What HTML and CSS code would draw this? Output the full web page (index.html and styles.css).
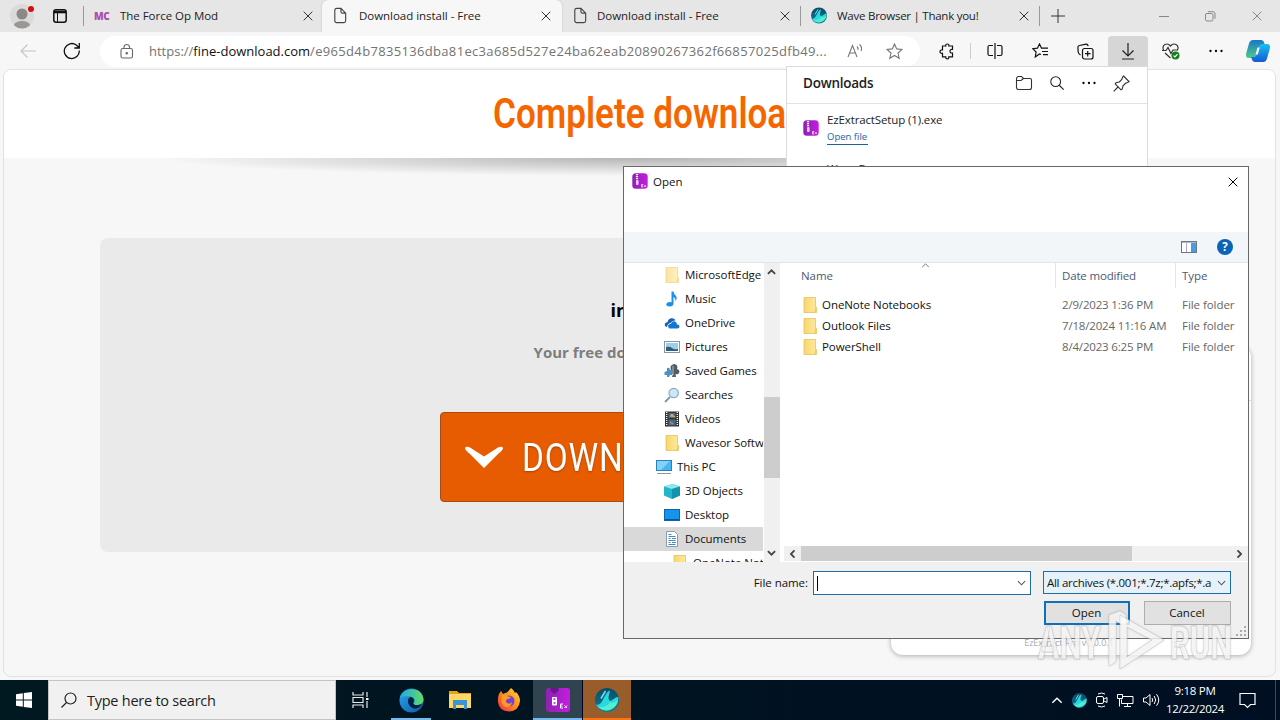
FILE: index.html
```
<!DOCTYPE html>
<html lang="en">
<head>
    <meta charset="UTF-8">
    <meta name="viewport" content="width=device-width, initial-scale=1.0">
    <title>Download install - Free</title>
    <link rel="stylesheet" href="styles.css">
</head>
<body>

    <svg class="defs" width="0" height="0">
        <defs>
            <linearGradient id="folderFill" x1="0" x2="1"><stop offset="0" stop-color="#f7d66c"/><stop offset="1" stop-color="#ffeb9f"/></linearGradient>
            <linearGradient id="purple" x1="0" x2="1"><stop offset="0" stop-color="#8d22b0"/><stop offset="1" stop-color="#c41de0"/></linearGradient>
            <linearGradient id="wave" x1="0" y1="0" x2="0" y2="1"><stop offset="0" stop-color="#0b4a67"/><stop offset="1" stop-color="#127c93"/></linearGradient>
            <linearGradient id="edgeBlue" x1="0" y1="0" x2="1" y2="1"><stop offset="0" stop-color="#2aa5ec"/><stop offset="1" stop-color="#0a5cab"/></linearGradient>
            <linearGradient id="edgeGreen" x1="0" x2="1"><stop offset="0" stop-color="#1fa8e5"/><stop offset="1" stop-color="#64dc63"/></linearGradient>
            <linearGradient id="fox" x1="1" y1="0" x2="0" y2="1"><stop offset="0" stop-color="#ffdf33"/><stop offset=".5" stop-color="#ff8a1d"/><stop offset="1" stop-color="#f5234d"/></linearGradient>
            <linearGradient id="copA" x1="0" y1="0" x2="0" y2="1"><stop offset="0" stop-color="#1877c9"/><stop offset="1" stop-color="#52c98a"/></linearGradient>
            <linearGradient id="copB" x1="0" y1="0" x2="0" y2="1"><stop offset="0" stop-color="#17c0f2"/><stop offset="1" stop-color="#1559d6"/></linearGradient>
        </defs>
        <symbol id="i-close" viewBox="0 0 10 10"><path d="M.7.7l8.6 8.6M9.3.7L.7 9.3" fill="none" stroke="currentColor"/></symbol>
        <symbol id="i-page" viewBox="0 0 16 18"><path d="M2.500 3.500q0-2 2-2H9l5 5v8q0 2-2 2H4.500q-2 0-2-2zM9 1.500v3.500q0 1.500 1.500 1.500H14" fill="none" stroke="#444" stroke-width="1.200"/></symbol>
        <symbol id="i-folder" viewBox="0 0 16 16"><path d="M2 .5h11.500v9l1 1v5H2z" fill="url(#folderFill)" stroke="#e6c25c" stroke-width=".8"/><path d="M12 15.500l1.500-6 1 1v5z" fill="#f2cd62"/></symbol>
        <symbol id="i-zip" viewBox="0 0 16 16"><rect x=".3" y=".3" width="15.400" height="15.400" rx="3.500" fill="url(#purple)"/><path d="M5 1v6" stroke="#fff" stroke-width="2.200" stroke-dasharray="1.200 .8"/><rect x="4" y="7" width="2.600" height="5" rx="1" fill="#f4c8fa"/><path d="M9.500 11.500h1.800m-1.800 0v2.500h1.800m-1.800-1.200h1.500M12.300 12.300l1.500 1.500m0-1.500l-1.500 1.500" stroke="#fff" stroke-width=".7" fill="none"/></symbol>
        <symbol id="i-zip-big" viewBox="0 0 24 24"><rect width="24" height="24" rx="3" fill="url(#purple)"/><path d="M4.500 0h8v3.500h-2v2h-4v-2h-2z" fill="#6c168b"/><rect x="6" y="9" width="5" height="8.500" rx="1" fill="#fff"/><path d="M7.500 11h2M7.500 15h2" stroke="#9e20c0" stroke-width="1.500"/><path d="M17 16h-2.500v4H17m-2.500-2h2M18.500 17.500l2.500 2.500m0-2.500l-2.500 2.500" stroke="#fff" fill="none"/></symbol>
        <symbol id="i-wave" viewBox="0 0 16 16"><circle cx="8" cy="8" r="8" fill="url(#wave)"/><path d="M.6 11C4 12 5 8 6.500 5.500 8 3 9 1.500 10 2c-1 3-1.500 5.500-.2 6.500C11.500 9 13 6 15.500 6A8 8 0 0 1 .6 11z" fill="#26dbe0"/><path d="M2 12.500c4 1 7-1 8-3 1.500 1.200 3.500 0 5.400-1.500a8 8 0 0 1-13.400 4.500z" fill="#55efd0"/><path d="M4 7l3-5" stroke="#75e5ff"/></symbol>
        <symbol id="i-chev" viewBox="0 0 10 6"><path d="M1 1l4 4 4-4" fill="none" stroke="currentColor" stroke-width="1.200"/></symbol>
        <symbol id="i-chev-bold" viewBox="0 0 10 6"><path d="M1 .8l4 4 4-4" fill="none" stroke="currentColor" stroke-width="2"/></symbol>
        <symbol id="i-search" viewBox="0 0 18 18"><circle cx="7.500" cy="7.500" r="5.500" fill="none" stroke="currentColor" stroke-width="1.200"/><path d="M11.500 11.500l5 5" stroke="currentColor" stroke-width="1.300"/></symbol>
        <symbol id="i-dots" viewBox="0 0 16 4"><circle cx="2.500" cy="2" r="1.150"/><circle cx="8" cy="2" r="1.150"/><circle cx="13.500" cy="2" r="1.150"/></symbol>
    </svg>

    <div class="tabs">
        <div class="tabs-start">
            <svg width="26" height="28" viewBox="0 0 26 28"><circle cx="12" cy="14" r="12" fill="#dadada"/><circle cx="12" cy="12" r="5.500" fill="#8b8885"/><path d="M4 23.500c0-6 16-6 16 0q-3.500 3-8 3t-8-3z" fill="#9a9794"/><circle cx="21" cy="7" r="3" fill="#d20f0f"/></svg>
            <svg width="14" height="14" viewBox="0 0 14 14"><rect x=".8" y=".8" width="12.400" height="12.400" rx="2.200" fill="none" stroke="#111" stroke-width="1.500"/><path d="M1 3h12" stroke="#111" stroke-width="2.600"/><path d="M4.500 3v10" stroke="#111"/></svg>
        </div>
        <div class="tab sep first">
            <span class="mc">MC</span><span class="tab-title">The Force Op Mod</span><svg class="x"><use href="#i-close"/></svg>
        </div>
        <div class="tab active">
            <svg class="fav"><use href="#i-page"/></svg><span class="tab-title">Download install - Free</span><svg class="x"><use href="#i-close"/></svg>
        </div>
        <div class="tab">
            <svg class="fav"><use href="#i-page"/></svg><span class="tab-title third">Download install - Free</span><svg class="x"><use href="#i-close"/></svg>
        </div>
        <div class="tab sep">
            <svg class="fav"><use href="#i-wave"/></svg><span class="tab-title wide">Wave Browser | Thank you!</span><svg class="x"><use href="#i-close"/></svg>
        </div>
        <div class="new-tab"><svg width="14" height="14"><path d="M7 0v14M0 7h14" stroke="#333"/></svg></div>
        <div class="win-btns">
            <svg width="10" height="10"><path d="M0 5.500h10" stroke="#888"/></svg>
            <svg width="11" height="11" fill="none" stroke="#888"><rect x=".5" y="2.500" width="7.500" height="7.500" rx="1.500"/><path d="M3 .7h5q2 0 2 2v5"/></svg>
            <svg class="x"><use href="#i-close"/></svg>
        </div>
    </div>

    <div class="toolbar">
        <div class="tool"><svg width="16" height="14" fill="none" stroke="#c4c4c4" stroke-width="1.100"><path d="M16 7H1M7.500 .5L1 7l6.500 6.500"/></svg></div>
        <div class="tool reload"><svg width="18" height="18" fill="none" stroke="#111" stroke-width="1.300"><path d="M16.300 8.500a7.500 7.500 0 1 1-3-5.500l2.700 2.700M16.300 1v5h-5"/></svg></div>
        <div class="address">
            <svg width="14" height="16" fill="none" stroke="#666" stroke-width="1.100"><rect x="1" y="5.500" width="11.500" height="9.500" rx="1.800"/><path d="M4 5.500V3.700a2.800 2.800 0 0 1 5.500 0v1.800"/><circle cx="6.700" cy="10.200" r=".7" fill="#666"/></svg>
            <div class="url">https://<b>fine-download.com</b><span class="path">/e965d4b7835136dba81ec3a685d527e24ba62eab20890267362f66857025dfb49...</span></div>
            <svg width="18" height="16" fill="none" stroke="#777" stroke-width="1.100"><path d="M1 14L5.500 2.500 10 14M2.700 10h5.600M10 3.500q1.500 1.500 1 3.500M12.500 1.500q3 2.700 1.700 6.500"/></svg>
            <svg width="17" height="17" viewBox="0 0 17 17" fill="none" stroke="#777" stroke-width="1.100"><path d="M8.500 1l2.200 4.900 5.300.5-4 3.600 1.200 5.300-4.700-2.800-4.700 2.800L5 10 1 6.400l5.300-.5z"/></svg>
        </div>
        <div class="tool"><svg width="17" height="17" fill="none" stroke="#111" stroke-width="1.200"><path d="M3.500 3h3.300q-.5-2 1.500-2t1.500 2h3.700v3.500q-2.500-.3-2.500 1.700t2.500 1.800v3.800H9.800q.3 2-1.500 2t-1.500-2H3.500v-3.500q-2.500.3-2.500-1.700t2.500-1.800z"/></svg></div>
        <div class="tool-sep"></div>
        <div class="tool"><svg width="16" height="16" fill="none" stroke="#111" stroke-width="1.200"><path d="M6 2.500H2.500q-1.500 0-1.500 1.500v7q0 1.500 1.500 1.500H6M10 2.500h3.500q1.500 0 1.500 1.500v7q0 1.500-1.500 1.500H10M8 0v16"/></svg></div>
        <div class="tool"><svg width="17" height="16" fill="none" stroke="#111" stroke-width="1.200"><path d="M9 11.500L7.500 11l-4.200 3 .8-5L.7 5.700l4.700-.5L7.500 1l2 4.200H16M10 8.500h6M11 11.700h5"/></svg></div>
        <div class="tool"><svg width="17" height="17" fill="none" stroke="#111" stroke-width="1.200"><rect x="5.500" y="5.500" width="10.500" height="10.500" rx="2"/><path d="M10.700 8v5.500M8 10.700h5.500M3.500 12Q1.500 11 1.200 9L.9 4.500Q.8 2.800 2.500 2.500L9 1.200q1.700-.2 2.200 2"/></svg></div>
        <div class="tool dl"><svg width="14" height="17" fill="none" stroke="#222" stroke-width="1.200"><path d="M7 0v12.500M1.500 7.500L7 13l5.500-5.500M1 16h12"/></svg></div>
        <div class="tool"><svg width="18" height="17" fill="none" stroke="#333" stroke-width="1.200"><path d="M1.500 7Q0 3 3 1.500T8.500 3Q11 0 14 1.500T15.500 7M0 7.500h4l2-3 3 6 2-3.500h5M3 10l5.500 5"/><circle cx="13.500" cy="12.500" r="4" fill="#13801c" stroke="none"/><path d="M11.600 12.600l1.400 1.400 2.500-2.800" stroke="#fff"/></svg></div>
        <div class="tool"><svg width="16" height="4"><use href="#i-dots"/></svg></div>
        <div class="tool cop"><svg width="26" height="24" viewBox="0 0 26 24"><path d="M8 1h8q2.500 0 3.200 3l.8 2h-3q-2 0-2.700 2.500L12 16q-.8 3-3 3H4q-4 0-2.700-5L4 4.500Q5 1 8 1z" fill="url(#copA)"/><path d="M18 23h-8q-2.500 0-3.200-3L6 18h3q2 0 2.700-2.500L14 8q.8-3 3-3h5q4 0 2.700 5L22 19.500Q21 23 18 23z" fill="url(#copB)"/><path d="M12.500 8.500h2.300l-2 7h-2.300z" fill="#f4fbff"/></svg></div>
    </div>

    <div class="page">
        <div class="page-head"><h1>Complete download</h1></div>
        <div class="head-shadow"></div>
        <div class="offer">
            <div class="offer-title">install</div>
            <div class="offer-text">Your free download is ready</div>
            <div class="offer-btn">
                <svg width="40" height="24" viewBox="0 0 40 24"><path d="M1 3q1-2 5-.5L20 11.500 34 2.500Q38 1 39 3q0 2-5 6L20 23 6 9Q1 5 1 3z" fill="#fff"/></svg>
                <span>DOWNLOAD</span>
            </div>
        </div>
    </div>

    <div class="ez-window"><div class="ez-line"></div><span>EzExtract Pro v1.0.0.1</span></div>

    <div class="downloads">
        <div class="dl-head">
            <strong>Downloads</strong>
            <svg width="18" height="16" fill="none" stroke="#333" stroke-width="1.100"><path d="M1.500 4q0-2.500 2-2.500h3l2 2H15q1.500 0 1.500 1.500v7.500q0 2-2 2h-11q-2 0-2-2zM1.500 5.500H6l2.500-2"/></svg>
            <svg width="16" height="16"><use href="#i-search"/></svg>
            <svg width="16" height="4"><use href="#i-dots"/></svg>
            <svg width="17" height="17" fill="none" stroke="#333" stroke-width="1.100"><path d="M10.500 1l5.500 5.500-1.300 1-2.200.8-2.500 2.500-.7 3.200-1.300.8-5.800-5.800.8-1.200 3.300-.8L8.800 4.500l.7-2.200zM5.500 11.500L.7 16.300"/></svg>
        </div>
        <div class="dl-item">
            <svg width="16" height="16"><use href="#i-zip"/></svg>
            <div><div class="dl-name">EzExtractSetup (1).exe</div><div class="dl-link">Open file</div></div>
        </div>
        <div class="dl-item next"><div class="dl-name">Wave Browser.exe</div></div>
    </div>

    <div class="dialog">
        <div class="dlg-title">
            <svg width="16" height="16"><use href="#i-zip"/></svg><span>Open</span><svg class="x"><use href="#i-close"/></svg>
        </div>
        <div class="dlg-bar">
            <svg width="16" height="12"><rect x=".5" y=".5" width="15" height="11" fill="#fff" stroke="#6b7785"/><path d="M0 1h16" stroke="#6b7785"/><rect x="10" y="2" width="5" height="9" fill="#4a9be0"/><path d="M5.500 2v9" stroke="#aab"/></svg>
            <div class="help">?</div>
        </div>
        <div class="dlg-body">
            <div class="tree">
                <div class="node pale"><svg><use href="#i-folder"/></svg><span>MicrosoftEdge</span></div>
                <div class="node"><svg viewBox="0 0 16 16"><path d="M7.500.5h2q.3 2.500 2.500 4.500 1.500 2-.5 5.500.3-3.500-2-4.500v6.500q0 3-4 3-3.500-.3-3.200-2.500.7-2.500 5.200-1.800z" fill="#1c8fe8"/></svg><span>Music</span></div>
                <div class="node"><svg viewBox="0 0 16 16"><path d="M3 12Q0 11.500 1 8.500q1-1.500 2.500-1.300Q4.500 3 8 3.200q2.500 0 3.500 2.300-3.500-.5-5 2.500Q3.500 8.500 3 12z" fill="#1664b8"/><path d="M5.500 13.500q-2-1-1.300-3.200Q5 8.700 6.800 9q1-3.500 4.200-2.500 2 .8 2 3 2.500 0 2.500 2.200-.2 1.800-2 1.800z" fill="#0f78d7"/></svg><span>OneDrive</span></div>
                <div class="node"><svg viewBox="0 0 16 16"><rect x=".5" y="2.500" width="15" height="11" fill="#fff" stroke="#8796a3"/><rect x="2" y="4" width="12" height="8" fill="#9fcdec"/><path d="M2 12V8q4-1 6 1t6 1v2z" fill="#315d78"/></svg><span>Pictures</span></div>
                <div class="node"><svg viewBox="0 0 16 16"><path d="M10.500 1q4 1 2.500 5 3.500 1 2 4-1 2-3.500 1l.5 3H8l1-3Q5.500 11 7 7q-2-5 3.500-6z" fill="#505c66"/><path d="M3 5q3-1 3 2h2v5H6l-1 2H3v-2L.5 12V9L3 8z" fill="#4e91c9"/><path d="M9 3v9" stroke="#aeb8bf"/></svg><span>Saved Games</span></div>
                <div class="node"><svg viewBox="0 0 16 16"><path d="M1 15l5-5" stroke="#8696a4" stroke-width="2"/><circle cx="9.700" cy="6" r="4.700" fill="#c9e8fa" stroke="#94a8ba" stroke-width="1.200"/></svg><span>Searches</span></div>
                <div class="node"><svg viewBox="0 0 16 16"><rect x="1" y=".5" width="14" height="15" fill="#333"/><path d="M2.700 1v14M13.300 1v14" stroke="#fff" stroke-width="1.300" stroke-dasharray="1 1"/><path d="M4.500 2h7v5h-7zM4.500 8.500h7v6h-7z" fill="#496992"/><path d="M6 5l2-2 3 3zM6 11l3 2" fill="#dca637" stroke="#d9a83c"/></svg><span>Videos</span></div>
                <div class="node"><svg><use href="#i-folder"/></svg><span>Wavesor Software</span></div>
                <div class="node top"><svg viewBox="0 0 16 16"><rect x=".5" y="1.500" width="15" height="10" fill="#47b5f2" stroke="#2b80b8"/><path d="M1 2h13L5 11H1z" fill="#84d0fa"/><path d="M1 14.500h14" stroke="#8498a8"/></svg><span>This PC</span></div>
                <div class="node"><svg viewBox="0 0 16 16"><path d="M0 3.500L8.500 1 16 3.500v9L8 16l-8-3.500z" fill="#23b5c9"/><path d="M0 3.500L8.500 1 16 3.500 8 6z" fill="#8ae8ef"/><path d="M8 6l8-2.500v9L8 16z" fill="#1294af"/></svg><span>3D Objects</span></div>
                <div class="node"><svg viewBox="0 0 16 16"><rect x=".5" y="2.500" width="15" height="11" fill="#1494ea" stroke="#0b66ac"/><path d="M1 12.500h14" stroke="#065a9c"/></svg><span>Desktop</span></div>
                <div class="node sel"><svg viewBox="0 0 16 16"><path d="M2.500.5h8l3 3v12h-11z" fill="#fff" stroke="#8b9ba8"/><path d="M4.500 3.500h3M4.500 5.500h7M4.500 7.500h2M8 7.500h4M4.500 9.500h7M4.500 11.500h2M8 11.500h4M4.500 13.500h7" stroke="#408bc4"/></svg><span>Documents</span></div>
                <div class="node deep"><svg><use href="#i-folder"/></svg><span>OneNote Notebooks</span></div>
            </div>
            <div class="vscroll">
                <svg class="up"><use href="#i-chev-bold"/></svg><div class="thumb"></div><svg><use href="#i-chev-bold"/></svg>
            </div>
            <div class="files">
                <div class="row cols"><span>Name<svg class="up"><use href="#i-chev"/></svg></span><span>Date modified</span><span>Type</span></div>
                <div class="row"><span><svg><use href="#i-folder"/></svg>OneNote Notebooks</span><span>2/9/2023 1:36 PM</span><span>File folder</span></div>
                <div class="row"><span><svg><use href="#i-folder"/></svg>Outlook Files</span><span>7/18/2024 11:16 AM</span><span>File folder</span></div>
                <div class="row"><span><svg><use href="#i-folder"/></svg>PowerShell</span><span>8/4/2023 6:25 PM</span><span>File folder</span></div>
                <div class="hscroll">
                    <svg class="left"><use href="#i-chev-bold"/></svg><div class="thumb"></div><svg class="right"><use href="#i-chev-bold"/></svg>
                </div>
            </div>
        </div>
        <div class="dlg-foot">
            <div class="foot-row">
                <label>File name:</label>
                <div class="combo"><i class="caret"></i><svg><use href="#i-chev"/></svg></div>
                <div class="filter"><span>All archives (*.001;*.7z;*.apfs;*.a</span><svg><use href="#i-chev"/></svg></div>
            </div>
            <div class="foot-row btns"><div class="btn primary">Open</div><div class="btn">Cancel</div></div>
            <svg class="grip" width="10" height="10" fill="#aaa"><path d="M8 0h2v2H8zM8 4h2v2H8zM8 8h2v2H8zM4 4h2v2H4zM4 8h2v2H4zM0 8h2v2H0z"/></svg>
        </div>
    </div>

    <svg class="watermark" width="200" height="66" viewBox="0 0 200 66">
        <text x="2" y="50" textLength="63" lengthAdjust="spacingAndGlyphs">ANY</text>
        <path d="M73 6v51l7-4V12l10 6V6l-6-4z"/>
        <path fill-rule="evenodd" d="M84 6l44 25-44 29zM91 18v30l25-17z"/>
        <text x="134" y="50" textLength="62" lengthAdjust="spacingAndGlyphs">RUN</text>
    </svg>

    <div class="taskbar">
        <div class="start"><svg width="16" height="16" fill="#fff"><path d="M0 2.300l6.800-1v6.200H0zM7.800 1.100L16 0v7.500H7.800zM0 8.500h6.800v6.200l-6.800-1zM7.800 8.500H16V16l-8.200-1.100z"/></svg></div>
        <div class="search"><svg width="18" height="18"><use href="#i-search"/></svg><span>Type here to search</span></div>
        <div class="app"><svg width="17" height="16" fill="none" stroke="#e8eaec" stroke-width="1.200"><path d="M1 0v3h10V0M1 16v-3h10v3M1 5.500h10v5H1zM15 0v5M15 9v7"/><path d="M14 6h2.500v2H14z" fill="#fff" stroke="none"/></svg></div>
        <div class="app open edge"><svg width="25" height="25" viewBox="0 0 25 25"><circle cx="12.500" cy="12.500" r="12" fill="url(#edgeBlue)"/><path d="M.7 11C2-1 23-3 24.500 11c.3 4-3 6-6.500 6-3 0-4-1.300-3-2.500 2-3-1-6-4.500-6C6 8 2 8 .7 11z" fill="url(#edgeGreen)"/><path d="M9 13c0-2 1-3.500 2.500-4 2.500 0 4.500 3 3 5.500-1 1.500.5 2.500 3 2.700 2 0 4-.5 5.500-1.700-2 5-7 6-9.500 4.500-3-1.500-4.500-4-4.500-7z" fill="#01203a"/></svg></div>
        <div class="app"><svg width="22" height="20" viewBox="0 0 22 20"><path d="M0 1h8l2 2h12v4H0z" fill="#e7a414"/><path d="M0 4h22v14H0z" fill="#ffd766"/><path d="M4 10h14v9h-3v-4H7v4H4z" fill="#3b94d4"/></svg></div>
        <div class="app"><svg width="24" height="24" viewBox="0 0 24 24"><path d="M2 6l2-3 2 3q2-1.500 4-1.500L14 0q3 2 4 5l1-1q4 4 4 9-1 10-11 10.500Q2 23 1 14q-.5-4 1-8z" fill="url(#fox)"/><circle cx="12" cy="13" r="5.500" fill="#7542d0"/><path d="M5 7q4-1 6 1.500l3 .5q-1 2-3.500 2-2 .5-1.500 3 3 3.500 6 0-1 6-7 5-5-3-3-12z" fill="#ff9824"/></svg></div>
        <div class="app open ez"><svg width="24" height="24"><use href="#i-zip-big"/></svg></div>
        <div class="app open wave"><svg width="24" height="24"><use href="#i-wave"/></svg></div>
        <div class="tray">
            <svg class="up" width="12" height="7"><use href="#i-chev"/></svg>
            <svg width="15" height="15"><use href="#i-wave"/></svg>
            <svg width="12" height="16" fill="none" stroke="#fff"><rect x=".5" y="4.500" width="7" height="7" rx="1.500"/><path d="M8 7l3-1.500v5L8 9M2 2q3.500-2 7 0M2 14q3.500 2 7 0"/></svg>
            <svg width="17" height="15" fill="none" stroke="#fff"><path d="M6 3.500h10v7H4.500v-4M7 13.500h7M10.500 10.500v3M.5 1.500h5v4h-5zM2.500 5.500v8"/></svg>
            <svg width="17" height="14" fill="none" stroke="#fff"><path d="M.5 5h2.500l4-3.500v11L3 9H.5zM9 5q1.500 2 0 4M11.200 3q3 4 0 8M13.500 1.200q4.500 5.800 0 11.600"/></svg>
        </div>
        <div class="clock"><span>9:18 PM</span><span>12/22/2024</span></div>
        <svg class="note" width="17" height="17" fill="none" stroke="#fff" stroke-width="1.200"><path d="M1 1.500h15v11h-4.500L8.500 15.500l-3-3H1z"/></svg>
        <div class="peek"></div>
    </div>

</body>
</html>
```
FILE: styles.css
```
* { box-sizing: border-box; }
body {
    margin: 0;
    width: 1280px;
    height: 720px;
    overflow: hidden;
    position: relative;
    display: flex;
    flex-direction: column;
    background: #f7f7f7;
    font-family: "Open Sans", "Noto Sans", sans-serif;
    font-size: 11.5px;
    color: #222;
}
svg { flex: none; display: block; }
span, strong, label { white-space: nowrap; }
.defs { position: absolute; }
.x { width: 10px; height: 10px; color: #333; }
.up { transform: rotate(180deg); }

/* tab strip */
.tabs {
    display: flex;
    height: 32px;
    background: #e6e6e6;
}
.tabs-start {
    width: 84px;
    display: flex;
    align-items: center;
    gap: 17px;
    padding-left: 10px;
}
.tab {
    width: 239px;
    display: flex;
    align-items: center;
    padding: 0 11px 1px 10px;
    position: relative;
}
.tab.first { width: 238px; padding-right: 9px; }
.tab.active {
    width: 240px;
    background: #f7f7f7;
    border-radius: 6px 6px 0 0;
    box-shadow: 0 0 2px #bbb;
    clip-path: inset(0 -3px 0 -3px);
}
.tab.sep::before, .new-tab::before {
    content: "";
    position: absolute;
    left: -1px;
    top: 6px;
    width: 1px;
    height: 20px;
    background: #999;
}
.tab-title {
    flex: 1;
    margin-left: 11px;
    letter-spacing: -.03px;
}
.first .tab-title, .tab-title.wide { margin-left: 10px; }
.tab-title.third { margin-left: 9px; }
.tab-title.wide { letter-spacing: -.25px; }
.fav { width: 16px; height: 17px; }
.mc {
    width: 16px;
    font-size: 10px;
    font-weight: 800;
    letter-spacing: -.4px;
    color: #a94fa9;
}
.new-tab {
    width: 36px;
    display: flex;
    align-items: center;
    justify-content: center;
    position: relative;
}
.win-btns {
    flex: 1;
    display: flex;
    align-items: center;
    justify-content: flex-end;
    gap: 36px;
    padding-right: 18px;
}
.win-btns .x { color: #888; }

/* toolbar */
.toolbar {
    display: flex;
    align-items: center;
    height: 37px;
    padding: 1px 0 0 6px;
}
.tool {
    width: 44px;
    height: 31px;
    display: flex;
    align-items: center;
    justify-content: center;
}
.tool + .tool { margin-left: 1px; }
.tool.reload { width: 43px; margin-left: 0; }
.tool.dl {
    width: 40px;
    background: #d6d6d6;
    border-radius: 4px 4px 0 0;
}
.tool.cop { width: 38px; }
.tool-sep {
    width: 1px;
    height: 16px;
    margin: 0 2px 0 1px;
    background: #ccc;
}
.address {
    display: flex;
    align-items: center;
    width: 820px;
    height: 31px;
    margin: 0 5px 0 7px;
    padding: 0 17px 0 20px;
    border-radius: 16px;
    background: #fff;
}
.url {
    flex: 1;
    margin-left: 15px;
    font-size: 13px;
    color: #737373;
    white-space: nowrap;
}
.url b { font-weight: 400; color: #111; }
.path { letter-spacing: .33px; }
.address svg:last-child { margin-left: 21px; }

/* page */
.page {
    height: 608px;
    margin: 0 4px 0 3px;
    border: 1px solid #e2e2e2;
    border-radius: 8px;
    background: #f7f7f7;
    overflow: hidden;
    display: flex;
    flex-direction: column;
    align-items: center;
}
.page-head {
    width: 100%;
    height: 88px;
    flex: none;
    background: #fff;
    text-align: center;
}
h1 {
    margin: 0;
    font: 600 42.5px/88px Roboto, sans-serif;
    color: #f56600;
    transform: translateX(10px) scaleX(.825);
}
.head-shadow {
    width: 960px;
    height: 18px;
    flex: none;
    background: radial-gradient(ellipse 50% 100% at 50% 0, #b5b5b5, #f7f7f7);
}
.offer {
    width: 1080px;
    height: 314px;
    margin-top: 62px;
    border-radius: 8px;
    background: #eaeaea;
    display: flex;
    flex-direction: column;
    align-items: center;
}
.offer-title {
    margin: 58px 2px 0 0;
    font-size: 18px;
    line-height: 28px;
    font-weight: 700;
    color: #000;
}
.offer-text {
    margin: 16px 2px 0 0;
    font-size: 15px;
    line-height: 24px;
    font-weight: 700;
    color: #7d7d7d;
}
.offer-btn {
    width: 400px;
    height: 90px;
    margin-top: 48px;
    padding-left: 23px;
    display: flex;
    align-items: center;
    border: 1px solid #a54b14;
    border-radius: 4px;
    background: #e75c00;
    color: #fff;
}
.offer-btn span {
    margin: 0 0 0 18px;
    font: 400 39.5px Roboto, sans-serif;
    letter-spacing: 1px;
    transform: scaleX(.845);
    transform-origin: 0 50%;
    text-shadow: 0 1px 2px #a44100;
}

/* windows above the page */
.ez-window {
    position: absolute;
    left: 891px;
    top: 345px;
    width: 360px;
    height: 310px;
    border-radius: 12px;
    background: #fff;
    box-shadow: 0 1px 5px rgba(0, 0, 0, .3);
    display: flex;
    flex-direction: column;
    align-items: center;
    justify-content: space-between;
    font-size: 9px;
    color: #aaa;
    padding: 0 4px 6px 0;
}
.ez-line {
    width: 360px;
    margin-right: -4px;
    height: 56px;
    border-bottom: 1px solid #ddd;
}
.downloads {
    position: absolute;
    left: 786px;
    top: 66px;
    width: 362px;
    height: 140px;
    background: #fff;
    border: 1px solid #dcdcdc;
}
.dl-head {
    display: flex;
    align-items: center;
    height: 37px;
    padding: 0 17px 4px 16px;
    border-bottom: 1px solid #e2e2e2;
    gap: 16px;
}
.dl-head strong {
    flex: 1;
    font-size: 13.5px;
    font-weight: 600;
    letter-spacing: -.25px;
}
.dl-item {
    display: flex;
    align-items: center;
    gap: 8px;
    height: 48px;
    padding-left: 16px;
}
.dl-name { line-height: 16px; margin-bottom: 2px; letter-spacing: -.13px; }
.dl-link {
    width: 41px;
    font-size: 9.5px;
    line-height: 14px;
    color: #1a62a3;
    border-bottom: 1px solid #1a62a3;
    white-space: nowrap;
}
.dl-item.next { padding-left: 40px; height: 36px; }

/* file dialog */
.dialog {
    position: absolute;
    left: 623px;
    top: 166px;
    width: 626px;
    height: 473px;
    border: 1px solid #686868;
    background: #fff;
    display: flex;
    flex-direction: column;
    color: #111;
}
.dlg-title {
    display: flex;
    align-items: center;
    height: 29px;
    margin-bottom: 36px;
    padding: 0 10px 0 8px;
}
.dlg-title svg:first-child { margin-bottom: 1px; }
.dlg-title span { flex: 1; margin-left: 5px; }
.dlg-title .x { color: #000; }
.dlg-bar {
    display: flex;
    align-items: center;
    justify-content: flex-end;
    gap: 20px;
    height: 31px;
    padding-right: 15px;
    background: #f3f6f9;
    border-bottom: 1px solid #e5e5e5;
}
.help {
    width: 16px;
    height: 16px;
    border-radius: 50%;
    background: #0b64b8;
    color: #fff;
    font-weight: 700;
    line-height: 16px;
    text-align: center;
}
.dlg-body {
    display: flex;
    height: 299px;
}
.tree {
    width: 139px;
    overflow: hidden;
}
.node {
    display: flex;
    align-items: center;
    height: 24px;
    padding: 0 0 1px 40px;
    gap: 5px;
    letter-spacing: -.05px;
}
.node svg, .row svg { width: 16px; height: 16px; }
.node.top { padding-left: 32px; }
.node.deep { padding-left: 48px; }
.node.sel { background: #d9d9d9; }
.node.pale svg { opacity: .65; }
.vscroll {
    display: flex;
    flex-direction: column;
    align-items: center;
    width: 16px;
    margin: 0 4px 0 1px;
    padding: 6px 1px 6px 0;
    background: #f0f0f0;
    color: #444;
}
.vscroll svg, .hscroll svg { width: 9px; height: 6px; }
.vscroll .thumb {
    width: 16px;
    height: 81px;
    margin: 122px -1px 72px 0;
    background: #cdcdcd;
}
.files {
    flex: 1;
    display: flex;
    flex-direction: column;
}
.row {
    display: grid;
    grid-template-columns: 272px 120px 1fr;
    height: 21px;
    color: #666;
}
.row span {
    display: flex;
    align-items: center;
    padding-left: 6px;
    letter-spacing: -.17px;
}
.row span:first-child {
    padding-left: 18px;
    gap: 4px;
    color: #111;
    letter-spacing: -.06px;
}
.row span:last-child { letter-spacing: -.05px; }
.row.cols {
    height: 25px;
    margin-bottom: 6px;
}
.row.cols span { color: #4c5a73; border-right: 1px solid #e5e5e5; }
.row.cols span:first-child { padding-left: 17px; position: relative; }
.row.cols span:last-child { border: 0; }
.row.cols .up {
    position: absolute;
    left: 137px;
    top: 0;
    width: 9px;
    height: 5px;
    color: #777;
}
.hscroll {
    display: flex;
    align-items: center;
    height: 15px;
    margin-top: auto;
    margin-bottom: 1px;
    padding: 0 4px;
    background: #f0f0f0;
    color: #444;
}
.hscroll .thumb {
    width: 331px;
    height: 15px;
    margin: 0 auto 0 4px;
    background: #cdcdcd;
}
.left { transform: rotate(90deg); }
.right { transform: rotate(-90deg); }
.dlg-foot {
    flex: 1;
    position: relative;
    padding: 9px 17px 0 0;
    background: #f0f0f0;
}
.foot-row {
    display: flex;
    align-items: center;
    justify-content: flex-end;
}
.foot-row label { padding-bottom: 1px; letter-spacing: -.05px; }
.combo, .filter {
    height: 24px;
    display: flex;
    align-items: center;
    justify-content: space-between;
    border: 1px solid #1c6ea4;
    background: #fff;
    padding: 0 4px;
}
.combo { width: 218px; margin: 0 12px 0 5px; padding-left: 3px; }
.filter {
    width: 188px;
    height: 23px;
    margin-bottom: 1px;
    padding-left: 3px;
    background: #e6f1fa;
    letter-spacing: -.28px;
}
.combo svg, .filter svg { width: 9px; height: 6px; color: #555; }
.caret { width: 1px; height: 15px; background: #000; }
.btns { margin-top: 6px; gap: 14px; }
.btn {
    width: 87px;
    height: 24px;
    padding: 0 1px 1px 0;
    border: 1px solid #adadad;
    background: #e1e1e1;
    display: flex;
    align-items: center;
    justify-content: center;
}
.btn.primary { width: 86px; border: 2px solid #0f6fb8; }
.grip {
    position: absolute;
    right: 2px;
    bottom: 2px;
}
.watermark {
    position: absolute;
    left: 1036px;
    top: 609px;
    fill: rgba(255, 255, 255, .75);
    stroke: rgba(175, 175, 175, .45);
    stroke-width: .8;
    font: 700 47px Roboto, sans-serif;
    filter: drop-shadow(0 0 1px rgba(120, 120, 120, .4));
}

/* taskbar */
.taskbar {
    display: flex;
    align-items: center;
    height: 40px;
    margin-top: 3px;
    background: linear-gradient(90deg, #001820, #000f22);
    color: #fff;
}
.start {
    width: 48px;
    display: flex;
    justify-content: center;
}
.search {
    width: 288px;
    height: 40px;
    display: flex;
    align-items: center;
    gap: 9px;
    padding-left: 11px;
    border: 1px solid #c4c4c4;
    background: #f1f1f1;
    color: #222;
    font-size: 14.5px;
    letter-spacing: -.25px;
}
.search svg { transform: scaleX(-1); }
.app {
    width: 49px;
    height: 40px;
    display: flex;
    align-items: center;
    justify-content: center;
    position: relative;
}
.app.edge { width: 50px; padding-left: 2px; }
.app.open::after {
    content: "";
    position: absolute;
    left: 6px;
    right: 4px;
    bottom: 0;
    height: 2px;
    background: #76b9ed;
}
.app.ez { background: #2f444f; }
.app.wave { background: #985d2a; border-left: 1px solid #002; }
.app.ez::after, .app.wave::after { left: 0; right: 0; }
.app.wave::after { background: #ff7114; }
.tray {
    display: flex;
    align-items: center;
    gap: 9px;
    margin-left: auto;
}
.clock {
    width: 70px;
    display: flex;
    flex-direction: column;
    align-items: center;
    line-height: 18px;
    letter-spacing: -.3px;
    padding-right: 2px;
    margin-left: 1px;
}
.note { margin-left: 8px; }
.peek {
    width: 5px;
    height: 40px;
    margin-left: 19px;
    border-left: 1px solid #3e4a58;
}
```
